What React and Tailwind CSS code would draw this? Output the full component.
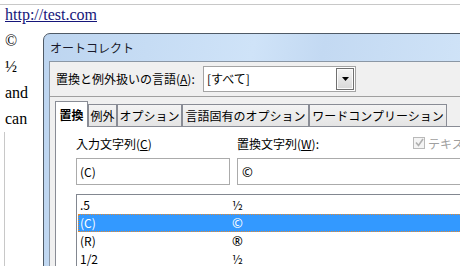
export default function App() {
  const inactiveTab =
    "shrink-0 h-[22px] border-t border-l border-r border-[#898c95] bg-[linear-gradient(#f4f4f4,#e4e4e4)] flex items-center justify-center text-[12px] leading-[14px] text-black";
  return (
    <div className="relative w-[460px] h-[266px] overflow-hidden bg-white">
      <div className="mt-[4px] border-t border-[#c8c8c8] font-['Liberation_Serif',serif] text-[16px] text-black">
        <div className="pl-[5px] leading-[20px]">
          <a className="text-[#16167a] underline">http://test.com</a>
        </div>
        <div className="mt-[3px] pl-[5px] leading-[26px]">
          <div>©</div>
          <div>½</div>
          <div>and</div>
          <div>can</div>
        </div>
        <div className="ml-[4px] h-[140px] border-l border-[#c8c8c8]" />
      </div>

      <div className="absolute left-[43px] top-[33px] w-[430px] h-[240px] overflow-hidden rounded-tl-[7px] border border-[#4f5a66] bg-[linear-gradient(100deg,#bdd5f0_0%,#cfe3f8_45%,#c3d9f2_60%,#d3e6f9_100%)] font-['Noto_Sans_CJK_JP','Noto_Sans',sans-serif]">
        <div className="h-[27px] flex items-center pl-[6px] text-[12px] leading-[14px] text-[#1a1a2a]">
          オートコレクト
        </div>
        <div className="ml-[5px] h-full border-l border-t border-[#8b97a5] bg-[#f0f0f0]">
          <div className="h-[34px] pt-[4px] pl-[6px]">
            <div className="flex items-center h-[26px]">
              <div className="w-[147px] shrink-0 text-[12px] leading-[14px] text-black">
                置換と例外扱いの言語(<span className="underline">A</span>):
              </div>
              <div className="w-[153px] h-[26px] shrink-0 border border-[#a4a4a4] bg-white flex items-center">
                <div className="flex-1 pl-[3px] text-[12px] leading-[14px] text-black">[すべて]</div>
                <div className="mr-[1px] w-[18px] h-[22px] border border-[#707070] bg-[linear-gradient(#f4f4f4,#d8d8d8)] shadow-[inset_0_0_0_1px_#fbfbfb] flex items-center justify-center">
                  <svg width="7" height="4" viewBox="0 0 7 4">
                    <polygon points="0,0 7,0 3.5,4" fill="#000" />
                  </svg>
                </div>
              </div>
            </div>
          </div>

          <div className="border-t border-[#a0a0a0] pt-[4px] pl-[5px] h-full">
            <div className="flex items-end h-[26px] border-b border-[#898c95]">
              <div className="relative z-10 shrink-0 w-[33px] h-[26px] -mb-px border-t border-l border-r border-[#898c95] bg-white flex items-center justify-center text-[12px] leading-[14px] font-semibold text-black">
                置換
              </div>
              <div className={`${inactiveTab} w-[29px]`}>例外</div>
              <div className={`${inactiveTab} w-[65px]`}>オプション</div>
              <div className={`${inactiveTab} w-[127px]`}>言語固有のオプション</div>
              <div className={`${inactiveTab} w-[138px]`}>ワードコンプリーション</div>
            </div>

            <div className="h-full border-l border-[#898c95] bg-white">
              <div className="pl-[20px] pt-[9px] flex gap-[7px]">
                <div className="w-[154px] shrink-0">
                  <div className="h-[16px] leading-[16px] text-[12px] text-black">
                    入力文字列(<span className="underline">C</span>)
                  </div>
                  <div className="mt-[6px] h-[27px] border border-[#ababab] bg-white pl-[3px] flex items-center text-[12px] leading-[14px] text-black">
                    (C)
                  </div>
                </div>
                <div className="w-[260px] shrink-0">
                  <div className="flex items-center h-[16px]">
                    <div className="w-[176px] shrink-0 text-[12px] leading-[16px] text-black">
                      置換文字列(<span className="underline">W</span>):
                    </div>
                    <div className="shrink-0 w-[12px] h-[12px] -mt-[3px] border border-[#b9b9b9] bg-[#f4f4f4] flex items-center justify-center">
                      <svg width="9" height="9" viewBox="0 0 9 9">
                        <polyline points="1,4.5 3.5,7.5 8,1" fill="none" stroke="#b0b0b0" strokeWidth="1.6" />
                      </svg>
                    </div>
                    <div className="ml-[3px] whitespace-nowrap text-[12px] leading-[16px] text-[#a0a0a0]">テキスト形式</div>
                  </div>
                  <div className="mt-[6px] h-[27px] border border-[#ababab] bg-white pl-[4px] flex items-center text-[13px] leading-[14px] text-black font-['Noto_Sans',sans-serif]">
                    ©
                  </div>
                </div>
              </div>

              <div className="mt-[9px] ml-[20px] w-[400px] border-l border-t border-[#828790] pl-px pt-px text-[12px] leading-[14px]">
                <div className="h-[18px] flex items-center pl-[2px] text-black">
                  <div className="w-[152px] shrink-0">.5</div>
                  <div>½</div>
                </div>
                <div className="h-[18px] flex items-center pl-[2px] bg-[#3399ff] text-white outline-1 outline-dotted outline-[#e8892c] -outline-offset-1">
                  <div className="w-[152px] shrink-0">(C)</div>
                  <div className="text-[13px] font-['Noto_Sans',sans-serif]">©</div>
                </div>
                <div className="h-[18px] flex items-center pl-[2px] text-black">
                  <div className="w-[152px] shrink-0">(R)</div>
                  <div className="text-[13px] font-['Noto_Sans',sans-serif]">®</div>
                </div>
                <div className="h-[18px] flex items-center pl-[2px] text-black">
                  <div className="w-[152px] shrink-0">1/2</div>
                  <div>½</div>
                </div>
              </div>
            </div>
          </div>
        </div>
      </div>
    </div>
  );
}
